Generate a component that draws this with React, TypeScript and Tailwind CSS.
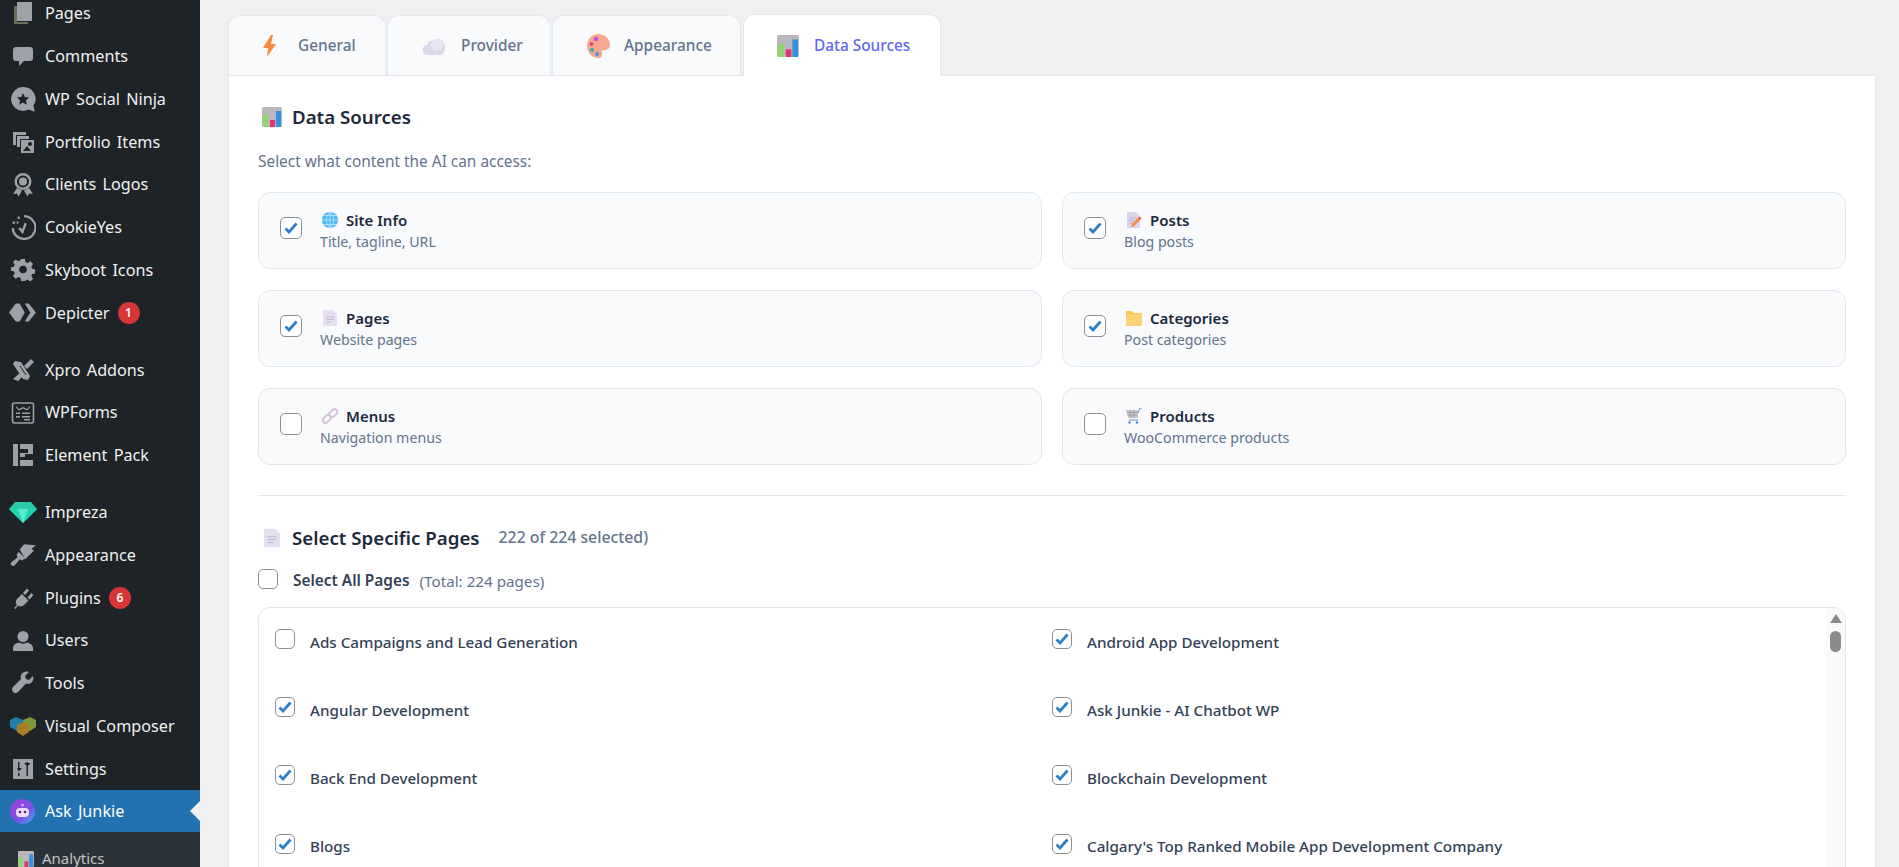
import type { ReactNode } from 'react'

const grey = '#9ca2a7'

function Svg({ children, size = 24 }: { children: ReactNode; size?: number }) {
  return (
    <svg width={size} height={size} viewBox="0 0 24 24" fill={grey}>
      {children}
    </svg>
  )
}

const menuIcons: Record<string, ReactNode> = {
  pages: (
    <Svg>
      <path d="M3 5h3v16h11v2H3z" fill="#6b6f5a" />
      <path d="M6 1h15v19H6z" />
    </Svg>
  ),
  comments: (
    <Svg>
      <path d="M5 3h14a3 3 0 0 1 3 3v8a3 3 0 0 1-3 3h-6l-5 5v-5H5a3 3 0 0 1-3-3V6a3 3 0 0 1 3-3z" />
    </Svg>
  ),
  ninja: (
    <Svg size={26}>
      <path d="M12 1a11 11 0 1 0 5 20.8l6 2-1.400-5.500A11 11 0 0 0 12 1z" />
      <path d="M12 6.500l1.700 3.600 3.900.5-2.900 2.700.8 3.900-3.500-2-3.500 2 .8-3.900-2.900-2.700 3.900-.5z" fill="#1d2327" />
    </Svg>
  ),
  portfolio: (
    <Svg>
      <path d="M2 2h13v3H5v10H2z" />
      <path d="M6 6h12v3H9v8H6z" />
      <path d="M10 10h13v13H10z" />
      <circle cx="19" cy="14" r="2" fill="#1d2327" />
      <path d="M12 21l4-5 4 5z" fill="#1d2327" />
    </Svg>
  ),
  clients: (
    <Svg>
      <path d="M12 0a8.500 8.500 0 1 0 0 17 8.500 8.500 0 0 0 0-17zm0 2.500a6 6 0 1 1 0 12 6 6 0 0 1 0-12z" />
      <circle cx="12" cy="8.500" r="4" />
      <path d="M6 15l-4 6 4-.5 1.500 3L11 17.500zM18 15l4 6-4-.5-1.500 3L13 17.500z" />
    </Svg>
  ),
  cookie: (
    <Svg size={26}>
      <path d="M13 2a10.500 10.500 0 1 1-10.500 11" fill="none" stroke={grey} strokeWidth="2" />
      <path d="M8.500 13l3 3.500 3-8" fill="none" stroke={grey} strokeWidth="2.200" />
      <circle cx="8" cy="3.500" r="1.200" />
      <circle cx="3.500" cy="8" r="1.200" />
      <circle cx="7" cy="8" r="1" />
    </Svg>
  ),
  gear: (
    <Svg>
      <path d="M10 1h4l.6 3.200 2 .9 2.800-1.800 2.700 2.800-1.800 2.700.9 2 3.200.6v4l-3.200.6-.9 2 1.800 2.700-2.800 2.700-2.700-1.800-2 .9L14 23h-4l-.6-3.200-2-.9-2.700 1.800L2 18l1.800-2.700-.9-2L0 12.800V9.500l2.900-.7.9-2L2 4.100l2.700-2.700 2.700 1.800 2-.9z" />
      <circle cx="12" cy="11.500" r="3.800" fill="#1d2327" />
    </Svg>
  ),
  depicter: (
    <Svg size={27}>
      <path d="M0 12l6-8h3.500l4.500 8-4.500 8H6z" />
      <path d="M14 4h3.500l6.500 8-6.500 8H14l5-8z" />
    </Svg>
  ),
  xpro: (
    <Svg>
      <path d="M4 3l6 1 9 14-2 4-5-1L2 6z" />
      <path d="M20 1l3 3-7 7-3-3zM10 14l3 3-6 6-5-2z" />
      <path d="M9 8l6 9" stroke="#1d2327" strokeWidth="1" />
    </Svg>
  ),
  forms: (
    <Svg>
      <rect x="1.500" y="2" width="21" height="20" rx="2" fill="none" stroke={grey} strokeWidth="1.600" />
      <path d="M5 5l3 3 4-2 4 2 3-3v1.500l-3 3-4-2-4 2-3-3z" />
      <path d="M5 11.500h4v1.500H5zM11 11.500h8v1.500h-8zM5 15h4v1.500H5zM11 15h8v1.500h-8zM13 18h6v1.500h-6z" />
    </Svg>
  ),
  element: (
    <Svg>
      <path d="M2 1h5v22H2zM9 17h13v6H9zM9 1h13v10h-8v3H9v-4h8V6H9z" />
    </Svg>
  ),
  impreza: (
    <svg width="28" height="24" viewBox="0 0 28 24">
      <path d="M6 2h16l6 7-14 14L0 9z" fill="#2bcba8" />
      <path d="M0 9h28L14 23z" fill="#1fd6ae" />
      <path d="M9 9l5 14 5-14z" fill="#5ceacb" />
    </svg>
  ),
  appearance: (
    <Svg size={26}>
      <path d="M9 7l4-5 11 1-4 3 2 2-8 8z" />
      <path d="M8 9l6 6-3 2-2-1-5 6c-2 1-4-1-3-3l6-5-1-2z" />
    </Svg>
  ),
  plugins: (
    <Svg>
      <path d="M3 22l3-3c-2-3-1-5 .5-6.500L11 8l6.500 6.500L13 19c-2 1.500-4 2-6 .5l-2.500 3.500z" />
      <path d="M12 7l4-4.500 2 2-4 4.500zM16.500 11.500l4-4.500 2 2-4 4.500z" />
    </Svg>
  ),
  users: (
    <Svg>
      <circle cx="12" cy="7.500" r="5.500" />
      <path d="M2 22v-3c0-3 3-5 6-5.500 2 1.500 6 1.500 8 0 3 .5 6 2.500 6 5.500v3z" />
    </Svg>
  ),
  tools: (
    <Svg>
      <path d="M22 5l-4 4-3-1-1-3 4-4c-3-1-6 0-7.500 2-1 1.500-1 3.500-.5 5L2 16c-1.500 1.500-1 3.500 0 5s3.500 1.500 5 0l8-8.500c2 .5 3.500.5 5-.5 2-1.500 3-4 2-7z" />
    </Svg>
  ),
  composer: (
    <svg width="26" height="20" viewBox="0 0 26 20">
      <path d="M0 4l6-3 7 3v8l-6 3-7-4z" fill="#1f7fa8" />
      <path d="M13 4l7-3 6 3v7l-6 4-7-3z" fill="#7d9a3a" />
      <path d="M7 9l6-3 6 3v7l-6 4-6-4z" fill="#a97f22" />
    </svg>
  ),
  settings: (
    <Svg>
      <path d="M2 2h20v20H2z" />
      <path d="M7 5h1.500v6H11l-3.200 3.500L6 11h1zM7 16h1.500v3H7zM15.500 8H17v11h-1.500zM15.500 5H17v1h2.500L16.200 9.500 13 6h2.500z" fill="#1d2327" />
    </Svg>
  ),
  junkie: (
    <svg width="25" height="25" viewBox="0 0 25 25">
      <defs>
        <linearGradient id="junkieGrad" x1="0" y1="0" x2="1" y2="1">
          <stop offset="0" stopColor="#9b3fd8" />
          <stop offset="0.6" stopColor="#7a52e8" />
          <stop offset="1" stopColor="#38b6e8" />
        </linearGradient>
      </defs>
      <circle cx="12.500" cy="12.500" r="12.500" fill="url(#junkieGrad)" />
      <circle cx="12.500" cy="6" r="1.500" fill="#c9b6f5" />
      <rect x="6" y="9" width="13" height="9" rx="4" fill="#f4d9f7" />
      <circle cx="10" cy="13" r="1.300" fill="#4a2a7a" />
      <circle cx="15" cy="13" r="1.300" fill="#4a2a7a" />
    </svg>
  ),
}

function ChartIcon({ size = 20 }: { size?: number }) {
  return (
    <svg width={size} height={size} viewBox="0 0 20 20" className="shrink-0">
      <rect width="20" height="20" rx="1.500" fill="#b9b6bd" />
      <path d="M1 8h5v12H1z" fill="#8ed86a" />
      <path d="M8 13h5v7H8z" fill="#e0356f" />
      <path d="M14 4h5v16h-5z" fill="#2f93e0" />
    </svg>
  )
}

function BoltIcon() {
  return (
    <svg width="14" height="22" viewBox="0 0 14 22" className="shrink-0">
      <path d="M8 0L0 13h5l-1 9 9-13H8l2-9z" fill="#f58a3c" />
    </svg>
  )
}

function CloudIcon() {
  return (
    <svg width="24" height="18" viewBox="0 0 24 18" className="shrink-0">
      <path d="M6 18a5 5 0 0 1-1-10c1-4 4-5 6-4 2-3 8-3 10 1 3 3 3 13-3 13z" fill="#dcd8ec" />
      <circle cx="15" cy="8" r="6" fill="#e8e6f3" />
    </svg>
  )
}

function PaletteIcon() {
  return (
    <svg width="23" height="24" viewBox="0 0 23 24" className="shrink-0">
      <path d="M11.500 0C18 0 23 5 23 11c0 4-3 5-6 5-2 0-3 1-2 3 1 3-1 5-4 5C5 24 0 18 0 12 0 5 5 0 11.500 0z" fill="#f6a78f" />
      <circle cx="9" cy="5" r="2.200" fill="#c04ae0" />
      <circle cx="4.500" cy="10" r="2" fill="#e2407f" />
      <circle cx="5" cy="16" r="2" fill="#3ab0a8" />
      <circle cx="10" cy="20" r="2" fill="#4a9ae8" />
    </svg>
  )
}

function GlobeIcon() {
  return (
    <svg width="16" height="16" viewBox="0 0 16 16">
      <circle cx="8" cy="8" r="8" fill="#4db8ee" />
      <path d="M0 8h16M8 0v16M2 3.500h12M2 12.500h12M8 0c-5 4-5 12 0 16M8 0c5 4 5 12 0 16" fill="none" stroke="#bfe7fb" strokeWidth=".8" />
    </svg>
  )
}

function PageIcon({ size = 14, h = 16 }: { size?: number; h?: number }) {
  return (
    <svg width={size} height={h} viewBox="0 0 14 16">
      <path d="M0 0h10l4 4v12H0z" fill="#e6dff0" />
      <path d="M3 7h8M3 9.500h8M3 12h5" stroke="#b9b2c6" strokeWidth=".8" />
    </svg>
  )
}

function PostIcon() {
  return (
    <svg width="15" height="16" viewBox="0 0 15 16">
      <path d="M0 0h9l4 4v12H0z" fill="#ddd3e6" />
      <path d="M2 6h8M2 8.500h5M2 11h4" stroke="#b6a9c4" strokeWidth=".8" />
      <path d="M4 15l1-3 6-6 2 2-6 6z" fill="#f58a3c" />
      <path d="M11 6l1.500-1.500 2 2L13 8z" fill="#ef5350" />
    </svg>
  )
}

function FolderIcon() {
  return (
    <svg width="16" height="15" viewBox="0 0 16 15">
      <path d="M0 0h6l1.500 2H16v13H0z" fill="#ffc64d" />
      <path d="M0 3h16v12H0z" fill="#ffd175" />
    </svg>
  )
}

function LinkIcon() {
  return (
    <svg width="16" height="16" viewBox="0 0 16 16" fill="none" stroke="#d3c4d8" strokeWidth="2">
      <rect x="0.500" y="8" width="9" height="5.500" rx="2.700" transform="rotate(-45 5 11)" />
      <rect x="6.500" y="2.500" width="9" height="5.500" rx="2.700" transform="rotate(-45 11 5)" />
    </svg>
  )
}

function CartIcon() {
  return (
    <svg width="16" height="16" viewBox="0 0 16 16">
      <path d="M0 2h12v8H2z" fill="#c9c9cf" />
      <path d="M1 4.500h11M1.500 7h10M4 2l1 8M8 2v8" stroke="#8f8f98" strokeWidth=".7" />
      <path d="M12 5l2-5h2M3 12h9" stroke="#6d8fc9" strokeWidth="1" fill="none" />
      <circle cx="3.500" cy="14.500" r="1.200" fill="#4d83d4" />
      <circle cx="11" cy="14.500" r="1.200" fill="#4d83d4" />
    </svg>
  )
}

function Check({ checked, large }: { checked: boolean; large?: boolean }) {
  return (
    <span
      className={
        large
          ? 'flex h-[22px] w-[22px] shrink-0 items-center justify-center rounded-[5px] border border-[#8c8f94] bg-white'
          : 'flex h-5 w-5 shrink-0 items-center justify-center rounded-[5px] border border-[#8c8f94] bg-white'
      }
    >
      {checked && (
        <svg width="14" height="12" viewBox="0 0 14 12">
          <path d="M1.500 6.500l3.500 3.500 7.500-8.500" fill="none" stroke="#2f7fc8" strokeWidth="2.800" />
        </svg>
      )}
    </span>
  )
}

const menuTop = [
  { key: 'pages', label: 'Pages' },
  { key: 'comments', label: 'Comments' },
  { key: 'ninja', label: 'WP Social Ninja' },
  { key: 'portfolio', label: 'Portfolio Items' },
  { key: 'clients', label: 'Clients Logos' },
  { key: 'cookie', label: 'CookieYes' },
  { key: 'gear', label: 'Skyboot Icons' },
  { key: 'depicter', label: 'Depicter', badge: 1 },
]
const menuMid = [
  { key: 'xpro', label: 'Xpro Addons' },
  { key: 'forms', label: 'WPForms' },
  { key: 'element', label: 'Element Pack' },
]
const menuBottom = [
  { key: 'impreza', label: 'Impreza' },
  { key: 'appearance', label: 'Appearance' },
  { key: 'plugins', label: 'Plugins', badge: 6 },
  { key: 'users', label: 'Users' },
  { key: 'tools', label: 'Tools' },
  { key: 'composer', label: 'Visual Composer' },
  { key: 'settings', label: 'Settings' },
]

function MenuRow({ item }: { item: { key: string; label: string; badge?: number } }) {
  return (
    <div className="flex h-[42.8px] items-center">
      <span className="flex w-[45px] shrink-0 items-center justify-center">{menuIcons[item.key]}</span>
      <span className="text-[16.2px] text-[#f0f0f1] [word-spacing:2px]">{item.label}</span>
      {item.badge && (
        <span className="ml-2 flex h-[22px] w-[22px] items-center justify-center rounded-full bg-[#d63638] text-[12px] font-semibold text-white">
          {item.badge}
        </span>
      )}
    </div>
  )
}

function Sidebar() {
  return (
    <aside className="w-[200px] shrink-0 overflow-hidden bg-[#1d2327]">
      <div className="-mt-[8px]">
        {menuTop.map((m) => (
          <MenuRow key={m.key} item={m} />
        ))}
        <div className="h-[14px]" />
        {menuMid.map((m) => (
          <MenuRow key={m.key} item={m} />
        ))}
        <div className="h-[14px]" />
        {menuBottom.map((m) => (
          <MenuRow key={m.key} item={m} />
        ))}
        <div className="relative flex h-[42px] items-center bg-[#2271b1]">
          <span className="flex w-[45px] shrink-0 items-center justify-center">{menuIcons.junkie}</span>
          <span className="text-[16.2px] text-white [word-spacing:2px]">Ask Junkie</span>
          <span className="absolute right-0 top-[11px] h-0 w-0 border-y-[10px] border-r-[10px] border-y-transparent border-r-[#f0f0f1]" />
        </div>
        <div className="h-[60px] bg-[#2c3338] pl-[18px] pt-[15px]">
          <div className="flex items-center gap-[8px] text-[15px] text-[#c3c4c7]">
            <ChartIcon size={16} />
            Analytics
          </div>
        </div>
      </div>
    </aside>
  )
}

const tabs = [
  { label: 'General', icon: <BoltIcon />, w: 'w-[158px]', gap: 'gap-[21px]' },
  { label: 'Provider', icon: <CloudIcon />, w: 'w-[164px]', gap: 'gap-[15px]' },
  { label: 'Appearance', icon: <PaletteIcon />, w: 'w-[189px]', gap: 'gap-[14px]' },
]

function Tabs() {
  return (
    <div className="flex items-end gap-[1px]">
      {tabs.map((t) => (
        <div
          key={t.label}
          className={`${t.w} ${t.gap} flex h-[60px] items-center rounded-t-xl border border-b-0 border-[#e2e8f0] bg-[#f8fafc] pl-[34px] text-[15.4px] font-medium text-[#64748b]`}
        >
          {t.icon}
          {t.label}
        </div>
      ))}
      <div className="relative z-10 ml-[1px] -mb-px flex h-[62px] w-[198px] items-center gap-[15px] rounded-t-xl border border-b-0 border-[#e2e8f0] bg-white pl-[33px] text-[15.4px] font-medium text-[#6366f1]">
        <ChartIcon size={22} />
        Data Sources
      </div>
    </div>
  )
}

const sources = [
  { label: 'Site Info', desc: 'Title, tagline, URL', icon: <GlobeIcon />, checked: true },
  { label: 'Posts', desc: 'Blog posts', icon: <PostIcon />, checked: true },
  { label: 'Pages', desc: 'Website pages', icon: <PageIcon />, checked: true },
  { label: 'Categories', desc: 'Post categories', icon: <FolderIcon />, checked: true },
  { label: 'Menus', desc: 'Navigation menus', icon: <LinkIcon />, checked: false },
  { label: 'Products', desc: 'WooCommerce products', icon: <CartIcon />, checked: false },
]

const pagesList = [
  { title: 'Ads Campaigns and Lead Generation', checked: false },
  { title: 'Android App Development', checked: true },
  { title: 'Angular Development', checked: true },
  { title: 'Ask Junkie - AI Chatbot WP', checked: true },
  { title: 'Back End Development', checked: true },
  { title: 'Blockchain Development', checked: true },
  { title: 'Blogs', checked: true },
  { title: "Calgary's Top Ranked Mobile App Development Company", checked: true },
]

function SourceCard({ s }: { s: (typeof sources)[number] }) {
  return (
    <div className="flex h-[77px] items-center gap-[18px] rounded-xl border border-[#e2e8f0] bg-[#f8fafc] pl-[21px]">
      <span className="mb-[6px]">
        <Check checked={s.checked} large />
      </span>
      <div>
        <div className="flex h-[22px] items-center text-[15px] font-semibold text-[#1e293b]">
          <span className="flex w-[26px] justify-center pr-[6px]">{s.icon}</span>
          {s.label}
        </div>
        <div className="h-[21px] text-[14.2px] leading-[21px] text-[#64748b]">{s.desc}</div>
      </div>
    </div>
  )
}

export default function App() {
  return (
    <div className="flex h-[867px] overflow-hidden bg-[#f0f0f1] font-['Noto_Sans',sans-serif]">
      <Sidebar />
      <main className="ml-[28px] mr-[23px] flex-1 pt-[14px]">
        <Tabs />
        <div className="h-[800px] border border-[#e2e8f0] bg-white px-[29px] pt-[29px]">
          <h2 className="flex h-[24px] items-center gap-[10px] pl-[4px] text-[18.7px] font-semibold text-[#1e293b]">
            <ChartIcon />
            Data Sources
          </h2>
          <p className="mt-[21px] h-[24px] text-[15.4px] leading-[24px] text-[#64748b]">Select what content the AI can access:</p>
          <div className="mt-[18px] grid grid-cols-2 gap-x-[20px] gap-y-[21px]">
            {sources.map((s) => (
              <SourceCard key={s.label} s={s} />
            ))}
          </div>
          <div className="mt-[30px] border-t border-[#e2e8f0] pt-[30px]">
            <div className="flex h-[24px] items-center pl-[6px]">
              <PageIcon size={16} h={20} />
              <h3 className="ml-[12px] text-[18.7px] font-semibold text-[#1e293b]">Select Specific Pages</h3>
              <span className="ml-[19px] text-[15.8px] font-medium text-[#64748b]">222 of 224 selected)</span>
            </div>
            <div className="mt-[19px] flex h-[24px] items-center">
              <span className="-translate-y-[2px]">
                <Check checked={false} />
              </span>
              <span className="ml-[15px] text-[15.4px] font-semibold text-[#334155]">Select All Pages</span>
              <span className="ml-[10px] text-[15.2px] text-[#64748b]">(Total: 224 pages)</span>
            </div>
            <div className="mt-[14px] flex overflow-hidden rounded-t-xl border border-[#e2e8f0]">
              <div className="grid flex-1 grid-cols-[777px_1fr] pl-[16px]">
                {pagesList.map((p) => (
                  <div key={p.title} className="flex h-[68.2px] items-center gap-[15px]">
                    <span className="mb-[6px]">
                      <Check checked={p.checked} />
                    </span>
                    <span className="text-[15.2px] font-medium text-[#334155]">{p.title}</span>
                  </div>
                ))}
              </div>
              <div className="flex w-[19px] shrink-0 flex-col items-center bg-[#fafafa] pt-[6px]">
                <span className="h-0 w-0 border-x-[6.500px] border-b-[9px] border-x-transparent border-b-[#8a8a8a]" />
                <span className="mt-[8px] h-[21px] w-[11px] rounded-full bg-[#8a8a8a]" />
              </div>
            </div>
          </div>
        </div>
      </main>
    </div>
  )
}
